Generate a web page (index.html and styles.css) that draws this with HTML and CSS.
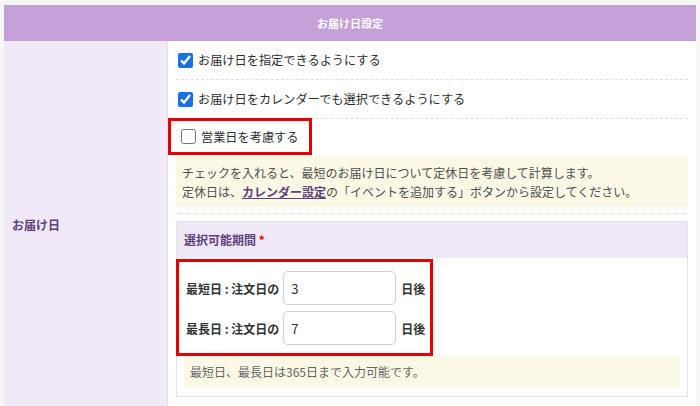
FILE: index.html
```html
<!DOCTYPE html>
<html lang="ja">
<head>
    <meta charset="UTF-8">
    <title>お届け日設定</title>
    <link rel="stylesheet" href="styles.css">
</head>
<body>
    <div class="settings">
        <div class="settings-head">お届け日設定</div>

        <div class="settings-row">
            <div class="row-label">お届け日</div>

            <div class="row-body">
                <label class="check-line">
                    <input type="checkbox" checked>
                    <span>お届け日を指定できるようにする</span>
                </label>
                <label class="check-line">
                    <input type="checkbox" checked>
                    <span>お届け日をカレンダーでも選択できるようにする</span>
                </label>
                <label class="check-line marked">
                    <input type="checkbox">
                    <span>営業日を考慮する</span>
                </label>

                <p class="note">
                    チェックを入れると、最短のお届け日について定休日を考慮して計算します。<br>
                    定休日は、<a href="#">カレンダー設定</a>の「イベントを追加する」ボタンから設定してください。
                </p>

                <div class="divider"></div>

                <div class="panel">
                    <div class="panel-head">選択可能期間 <span class="req">*</span></div>
                    <div class="range marked">
                        <div class="range-line">
                            <span class="range-label">最短日 : 注文日の</span>
                            <input type="text" class="days" value="3">
                            <span class="unit">日後</span>
                        </div>
                        <div class="range-line">
                            <span class="range-label">最長日 : 注文日の</span>
                            <input type="text" class="days" value="7">
                            <span class="unit">日後</span>
                        </div>
                    </div>
                    <p class="note small">最短日、最長日は365日まで入力可能です。</p>
                </div>
            </div>
        </div>
    </div>
</body>
</html>
```

FILE: styles.css
```css
body {
    margin: 0;
    padding: 5px 4px 0;
    background: #f6f6f6;
    font-family: "Noto Sans CJK JP", "Noto Sans", sans-serif;
    font-size: 12px;
    color: #333;
}

.settings { background: #fff; }

.settings-head {
    height: 36px;
    line-height: 36px;
    text-align: center;
    background: #c49fd8;
    color: #fff;
    font-size: 11px;
    font-weight: bold;
}

.settings-row { display: flex; align-items: center; }

.row-label {
    width: 155px;
    align-self: stretch;
    display: flex;
    align-items: center;
    padding-left: 8px;
    background: #f1e9f7;
    border-right: 1px solid #e6dfeb;
    color: #5f3f7d;
    font-weight: bold;
    font-size: 12px;
}

.row-body { flex: 1; padding: 0 8px 10px; }

.check-line {
    display: flex;
    align-items: center;
    height: 38px;
    border-bottom: 1px dashed #dedede;
    font-size: 12.2px;
    color: #2e2e2e;
    cursor: pointer;
}
.check-line input {
    width: 15px;
    height: 15px;
    margin: 0 5px 0 2px;
    accent-color: #1a6fe3;
}

.check-line.marked {
    width: fit-content;
    height: 31px;
    margin-top: -1px;
    margin-left: -8px;
    padding: 0 10px 0 8px;
    border: 3px solid #e60000;
}

.note {
    margin: 1px 0 0;
    padding: 7px 6px 6px;
    line-height: 19px;
    background: #fbf8e6;
    color: #4f4f4f;
}
.note a { color: #5f3f7d; font-weight: bold; }

.divider { margin-top: 6px; border-top: 1px dotted #ddd; }

.panel {
    margin-top: 7px;
    border: 1px solid #e4e4e4;
    padding-bottom: 9px;
}

.panel-head {
    height: 36px;
    line-height: 36px;
    padding-left: 7px;
    background: #efe8f6;
    color: #5f3f7d;
    font-weight: bold;
}
.req { color: #e60000; }

.range {
    width: fit-content;
    margin: 1px 0 0 -1px;
    padding: 9px 5px 8px 7px;
    border: 3px solid #e60000;
    display: flex;
    flex-direction: column;
    gap: 6px;
}

.range-line { display: flex; align-items: center; gap: 4px; }
.range-label { font-weight: bold; }

.days {
    width: 113px;
    height: 34px;
    box-sizing: border-box;
    padding: 0 7px;
    border: 1px solid #cfcfcf;
    border-radius: 5px;
    font-family: inherit;
    font-size: 13px;
    color: #333;
}

.unit { font-weight: bold; margin-left: 1px; }

.note.small {
    margin: 0 7px;
    padding: 6px 6px;
    color: #666;
}
```
